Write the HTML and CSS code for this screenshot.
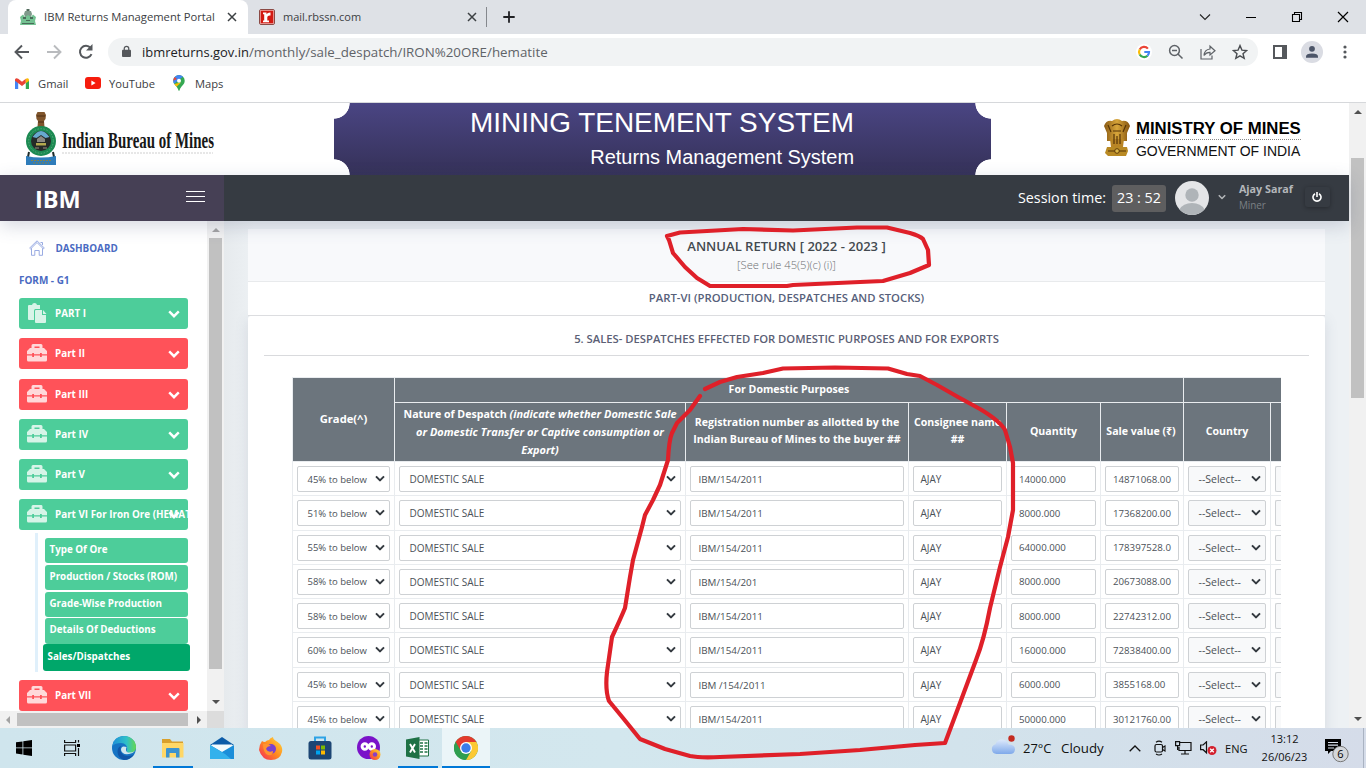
FILE: index.html
```
<!DOCTYPE html>
<html lang="en">
<head>
<meta charset="utf-8">
<title>IBM Returns Management Portal</title>
<link rel="stylesheet" href="styles.css">
</head>
<body>
<svg class="defs" aria-hidden="true">
  <defs>
    <symbol id="chev" viewBox="0 0 12 8"><path d="M1.200 1.400 6 6.200l4.800-4.800" fill="none" stroke="currentColor" stroke-width="2.400"/></symbol>
    <symbol id="x" viewBox="0 0 10 10"><path d="M1 1l8 8M9 1l-8 8" fill="none" stroke="#3c4043" stroke-width="1.500"/></symbol>
    <symbol id="toolbox" viewBox="0 0 20 18">
      <path fill-rule="evenodd" d="M6 0h8a1.500 1.500 0 0 1 1.500 1.500V4H17l3 3v3.300h-5.200V9h-1.800v1.300H7V9H5.200v1.300H0V7l3-3h1.500V1.500A1.500 1.500 0 0 1 6 0zM7.500 2.500V4h5V2.500z"/>
      <path d="M0 11.500h5.200V13H7v-1.500h6V13h1.800v-1.500H20V16a1.500 1.500 0 0 1-1.500 1.500h-17A1.500 1.500 0 0 1 0 16z"/>
    </symbol>
    <linearGradient id="edgeA" x1="0" y1="0" x2="1" y2="0"><stop offset="0" stop-color="#1f8fd8"/><stop offset=".6" stop-color="#2fc0c8"/><stop offset="1" stop-color="#66d850"/></linearGradient>
    <linearGradient id="cloud" x1="0" y1="0" x2="0" y2="1"><stop offset="0" stop-color="#dde9fb"/><stop offset="1" stop-color="#7fa9ea"/></linearGradient>
    <linearGradient id="fire" x1="1" y1="0" x2="0" y2="1"><stop offset="0" stop-color="#ffe040"/><stop offset=".5" stop-color="#ff8a1f"/><stop offset="1" stop-color="#f5255c"/></linearGradient>
    <linearGradient id="gold" x1="0" y1="0" x2="1" y2="0"><stop offset="0" stop-color="#8a5a14"/><stop offset=".5" stop-color="#d8a63a"/><stop offset="1" stop-color="#84530f"/></linearGradient>
  </defs>
</svg>

<div class="tabs">
  <div class="tab active">
    <svg class="fav" viewBox="0 0 16 16"><path d="M6.500 0h3v2h-3z" fill="#516b5c"/><path d="M5 2h6l1 3-1 3H5L4 5z" fill="#7f9a8b"/><path d="M0 8l3-2.500L5 8l3-2 3 2 2-2.500L16 8l-1 4 1 4H0l1-4z" fill="#74c292"/><path d="M3 8h3v2H3zM10 8h3v2h-3zM6 11h4v1H6zM2 14h12v1H2z" fill="#4a6c5a"/></svg>
    <span class="tab-title t1">IBM Returns Management Portal</span>
    <svg class="tx" viewBox="0 0 10 10"><use href="#x"/></svg>
  </div>
  <div class="tab">
    <svg class="fav" viewBox="0 0 16 16"><rect x=".5" y=".5" width="15" height="15" rx="1.500" fill="#fff" stroke="#8b4a45"/><rect x="1.500" y="1.500" width="13" height="13" fill="#d21a12"/><path d="M4 3.500h3.500v1.800q1.300-2 4-1.800v3q-3.200-.3-3.200 1.700v3.300H10v1.700H4v-1.700h1.200V5.200H4z" fill="#fff"/></svg>
    <span class="tab-title t2">mail.rbssn.com</span>
    <svg class="tx" viewBox="0 0 10 10"><use href="#x"/></svg>
  </div>
  <i class="tab-sep"></i>
  <svg class="plus" viewBox="0 0 12 12"><path d="M6 .3v11.400M.3 6h11.400" stroke="#202124" stroke-width="1.800"/></svg>
  <div class="wc">
    <svg width="12" height="12" viewBox="0 0 12 12"><path d="M1 3.500l5 5 5-5" fill="none" stroke="#222" stroke-width="1.100"/></svg>
    <svg width="12" height="12" viewBox="0 0 12 12"><path d="M1 6.500h10" stroke="#000"/></svg>
    <svg width="12" height="12" viewBox="0 0 12 12"><path d="M1.500 3.500h7v7h-7zM3.500 3.500v-2h7v7h-2" fill="none" stroke="#000" stroke-width="1.100"/></svg>
    <svg width="12" height="12" viewBox="0 0 12 12"><path d="M1 1l10 10M11 1L1 11" stroke="#000" stroke-width="1.200"/></svg>
  </div>
</div>

<div class="toolbar">
  <svg class="nav" viewBox="0 0 16 16"><path d="M15 8H2M8 1.500L1.500 8 8 14.500" fill="none" stroke="#55585c" stroke-width="1.900"/></svg>
  <svg class="nav" viewBox="0 0 16 16"><path d="M1 8h13M8 1.500L14.500 8 8 14.500" fill="none" stroke="#b9bbbe" stroke-width="1.900"/></svg>
  <svg class="nav" viewBox="0 0 16 16"><path d="M13.500 10.200A6 6 0 1 1 12.600 4" fill="none" stroke="#55585c" stroke-width="2"/><path d="M14.500 0v6.500H8z" fill="#55585c"/></svg>
  <div class="omni">
    <svg class="lock" viewBox="0 0 10 13"><rect y="4.500" width="10" height="8" rx="1" fill="#55585c"/><path d="M2.500 5V3.200a2.500 2.500 0 0 1 5 0V5" fill="none" stroke="#55585c" stroke-width="1.400"/></svg>
    <span class="url"><b>ibmreturns.gov.in</b><span>/monthly/sale_despatch/IRON%20ORE/hematite</span></span>
    <div class="omni-icons">
      <svg viewBox="0 0 16 16"><circle cx="8" cy="8" r="8" fill="#fff"/><g fill="none" stroke-width="2.200"><path d="M11.900 4.600A5 5 0 0 0 3.700 5.500" stroke="#ea4335"/><path d="M3.700 5.500a5 5 0 0 0 0 5" stroke="#fbbc05"/><path d="M3.700 10.500a5 5 0 0 0 7.800 1.200" stroke="#34a853"/><path d="M11.500 11.700A5 5 0 0 0 13 8H8.300" stroke="#4285f4"/></g></svg>
      <svg viewBox="0 0 16 16"><path d="M9.700 9.700L14.500 14.500M4 6.500h5" stroke="#5f6368" stroke-width="1.500"/><circle cx="6.500" cy="6.500" r="4.900" fill="none" stroke="#5f6368" stroke-width="1.500"/></svg>
      <svg viewBox="0 0 16 16"><path d="M1 5v10h11v-3.500" fill="none" stroke="#5f6368" stroke-width="1.200"/><path d="M4 11.500Q4.500 5.500 10 5V2.200L15 6.700 10 11V8.300Q6.200 8.200 4 11.500z" fill="none" stroke="#5f6368" stroke-width="1.200"/></svg>
      <svg viewBox="0 0 16 16"><path d="M8 1.600l1.900 4.500 4.800.4-3.700 3.200 1.200 4.700L8 11.900l-4.200 2.500L5 9.700 1.300 6.500l4.800-.4z" fill="none" stroke="#4a4d51" stroke-width="1.400"/></svg>
    </div>
  </div>
  <svg class="panel" viewBox="0 0 14 14"><path d="M1 1h12v12H1z" fill="none" stroke="#55585c" stroke-width="2"/><path d="M9 1h4v12H9z" fill="#55585c"/></svg>
  <svg class="user" viewBox="0 0 22 22"><circle cx="11" cy="11" r="11" fill="#dadce3"/><circle cx="11" cy="7.800" r="2.900" fill="#4c5568"/><path d="M5 16.800v-1.300q0-3 6-3t6 3v1.300z" fill="#4c5568"/></svg>
  <svg class="dots" viewBox="0 0 4 14"><g fill="#55585c"><circle cx="2" cy="2" r="1.600"/><circle cx="2" cy="7" r="1.600"/><circle cx="2" cy="12" r="1.600"/></g></svg>
</div>

<div class="bookmarks">
  <svg width="14" height="11" viewBox="0 0 14 11"><path d="M0 1.500V11h3.200V4.500z" fill="#4285f4"/><path d="M14 1.500V11h-3.200V4.500z" fill="#34a853"/><path d="M0 1.500Q1-.6 3.200.8L7 3.700 10.800.8 10.800 5 7 8 0 2.800z" fill="#ea4335"/><path d="M10.800.8Q13-.6 14 1.500V3l-3.200 2.300z" fill="#fbbc04"/></svg>
  <span class="bk1">Gmail</span>
  <svg width="16" height="12" viewBox="0 0 16 12"><rect width="16" height="12" rx="3" fill="#f61c0d"/><path d="M6.400 3.400v5.200L10.600 6z" fill="#fff"/></svg>
  <span class="bk2">YouTube</span>
  <svg width="12" height="16" viewBox="0 0 12 16"><path d="M6 0a5.700 5.700 0 0 1 5.700 5.700C11.700 10 7.500 11 6.500 15.500q-.5.700-1 0C4.500 11 .3 10 .3 5.700A5.700 5.700 0 0 1 6 0z" fill="#34a853"/><path d="M1.200 8.800L10 1.600Q8 0 6 0A5.700 5.700 0 0 0 .3 5.700q0 1.800.9 3.100z" fill="#4285f4"/><path d="M.3 5.700Q.4 3.500 1.700 2L4 4z" fill="#ea4335"/><path d="M1.300 9L8 7.500 3.500 11.700z" fill="#fbbc04"/><circle cx="6" cy="5.700" r="2" fill="#fff"/></svg>
  <span class="bk3">Maps</span>
</div>

<div class="page">
  <div class="site">
    <header class="brand">
      <svg class="seal" viewBox="0 0 30 53"><path d="M11.500 0h7l1.500 3-.5 4-1.500 2 .5 6h-7l.5-6-1.500-2-.5-4z" fill="#80552c"/><path d="M11 4h8M12 10h6" stroke="#4c2f14"/><path d="M3 40l-1 5M27 40l1 5" stroke="#1d2c2a" stroke-width="2"/><circle cx="15" cy="29" r="15" fill="#1c8a52"/><circle cx="15" cy="29" r="12.300" fill="none" stroke="#56ab7b" stroke-dasharray="1.500 1.500"/><circle cx="15" cy="29" r="10" fill="#252a28"/><path d="M6.500 25q8.500-12 17 0l-4 1-4.500-3-4.500 3z" fill="#67a9ce"/><path d="M10 31h10v2.500H10z" fill="#b3a94e"/><path d="M11 27l4-3 4 3v3h-8z" fill="#8b8982"/><path d="M9 36h4M17 36h4" stroke="#9a8d80"/><path d="M0 44q15 3 30 0v9H0z" fill="#2f7dbb"/><path d="M5 48.500h20M7 51h16" stroke="#87834b" stroke-dasharray="2 1"/></svg>
      <svg class="ibm-name" width="156" height="34" viewBox="0 0 156 34"><text x="1" y="22" textLength="152" lengthAdjust="spacingAndGlyphs">Indian Bureau of Mines</text><path d="M1 27h151" stroke="#cfcfcf" stroke-dasharray="2 1"/></svg>
      <div class="banner"><div class="mts">MINING TENEMENT SYSTEM</div><div class="rms">Returns Management System</div></div>
      <svg class="lions" viewBox="0 0 26 38"><path d="M8 2q5-4 10 0 6-1 8 5l-3 7v8H3v-8L0 7q2-6 8-5z" fill="url(#gold)"/><path d="M6 20h14l-1 8H7z" fill="#b98525"/><path d="M3 28h20l1 4-2 5H4l-3-3z" fill="#b98a24"/><path d="M8 7q5-4 10 0M9 12h8M4 6l3 7M22 6l-3 7M10 15v10M16 15v10M13 17v8M4 32h18" fill="none" stroke="#573507" stroke-width="1.200"/><circle cx="13" cy="32" r="2.300" fill="#ddb94a" stroke="#5f3a08"/></svg>
      <div class="ministry"><b>MINISTRY OF MINES</b><span>GOVERNMENT OF INDIA</span></div>
    </header>
    <div class="navbar">
      <div class="nav-left"><span>IBM</span><svg width="19" height="12" viewBox="0 0 19 12"><path d="M0 .5h19M0 5.500h19M0 10.500h19" stroke="#fff" stroke-width="1.200"/></svg></div>
      <div class="nav-right">
        <span class="sess">Session time:</span><span class="time">23 : 52</span>
        <svg class="avatar" viewBox="0 0 34 34"><circle cx="17" cy="17" r="17" fill="#e4e5e7"/><circle cx="17" cy="14" r="6.700" fill="#afb4b8"/><path d="M4.500 28.500Q8 22 17 22t12.500 6.500A17 17 0 0 1 4.500 28.500z" fill="#afb4b8"/></svg>
        <svg class="ncar" viewBox="0 0 12 8"><use href="#chev"/></svg>
        <div class="who"><b>Ajay Saraf</b><span>Miner</span></div>
        <div class="power"><svg width="10" height="10" viewBox="0 0 10 10"><path d="M3 1.700a4 4 0 1 0 4 0M5 0v5" fill="none" stroke="#fff" stroke-width="1.600"/></svg></div>
      </div>
    </div>
    <div class="body">
      <aside class="side">
        <div class="side-top">
          <div class="menu">
            <div class="dash"><svg width="16" height="16" viewBox="0 0 16 16"><path d="M.7 8L8 .8 15.300 8l-.9.9L8 2.500 1.600 8.900zM2.500 8.300v7h3.300v-4.800h4.400v4.800h3.300v-7M11.500 2.500h2V5" fill="none" stroke="#8ea3e0" stroke-width=".9"/></svg><span>DASHBOARD</span></div>
            <div class="form-h">FORM - G1</div>
            <div class="mi g"><svg class="ic tall" viewBox="0 0 20 20"><path d="M2 2h3q.3-2 2.500-2T10 2h3v4H8.500Q7 6 7 8v9H2q-1 0-1-1V3q0-1 1-1z"/><path d="M9 7h6v5h4v7q0 1-1 1H9q-1 0-1-1V8q0-1 1-1zM16 7l3.500 4H16z"/></svg><span>PART I</span><svg class="cv" viewBox="0 0 12 8"><use href="#chev"/></svg></div>
            <div class="mi r"><svg class="ic" viewBox="0 0 20 18"><use href="#toolbox"/></svg><span>Part II</span><svg class="cv" viewBox="0 0 12 8"><use href="#chev"/></svg></div>
            <div class="mi r"><svg class="ic" viewBox="0 0 20 18"><use href="#toolbox"/></svg><span>Part III</span><svg class="cv" viewBox="0 0 12 8"><use href="#chev"/></svg></div>
            <div class="mi g"><svg class="ic" viewBox="0 0 20 18"><use href="#toolbox"/></svg><span>Part IV</span><svg class="cv" viewBox="0 0 12 8"><use href="#chev"/></svg></div>
            <div class="mi g"><svg class="ic" viewBox="0 0 20 18"><use href="#toolbox"/></svg><span>Part V</span><svg class="cv" viewBox="0 0 12 8"><use href="#chev"/></svg></div>
            <div class="mi g"><svg class="ic" viewBox="0 0 20 18"><use href="#toolbox"/></svg><span>Part VI For Iron Ore (HEMAT</span><svg class="cv" viewBox="0 0 12 8"><use href="#chev"/></svg></div>
            <div class="sub">
              <div>Type Of Ore</div><div>Production / Stocks (ROM)</div><div>Grade-Wise Production</div><div>Details Of Deductions</div><div class="cur">Sales/Dispatches</div>
            </div>
            <div class="mi r last"><svg class="ic" viewBox="0 0 20 18"><use href="#toolbox"/></svg><span>Part VII</span><svg class="cv" viewBox="0 0 12 8"><use href="#chev"/></svg></div>
          </div>
          <div class="vbar"><i class="tri up grey"></i><i class="thumb"></i><i class="tri down"></i></div>
        </div>
        <div class="hbar"><i class="tri left grey"></i><i class="hthumb"></i><i class="tri right"></i><i class="corner"></i></div>
      </aside>
      <main class="main">
        <div class="title"><h1>ANNUAL RETURN [ 2022 - 2023 ]</h1><p>[See rule 45(5)(c) (i)]</p></div>
        <div class="part">PART-VI (PRODUCTION, DESPATCHES AND STOCKS)</div>
        <div class="card">
          <h2>5. SALES- DESPATCHES EFFECTED FOR DOMESTIC PURPOSES AND FOR EXPORTS</h2>
          <div class="grid" id="grid">
            <div class="th grade">Grade(^)</div>
            <div class="th dom">For Domestic Purposes</div>
            <div class="th exp"></div>
            <div class="th nature"><span>Nature of Despatch <em>(indicate whether Domestic Sale<br>or Domestic Transfer or Captive consumption or<br>Export)</em></span></div>
            <div class="th">Registration number as allotted by the<br>Indian Bureau of Mines to the buyer ##</div>
            <div class="th">Consignee name<br>##</div>
            <div class="th">Quantity</div>
            <div class="th sv">Sale value (₹)</div>
            <div class="th">Country</div>
            <div class="th"></div>
          </div>
        </div>
      </main>
    </div>
  </div>
  <div class="pbar"><i class="tri up"></i><i class="pthumb"></i><i class="tri down"></i></div>
</div>

<div class="taskbar">
  <div class="ti"><svg width="16" height="16" viewBox="0 0 16 16"><path d="M0 2.300L6.500 1.400v6.100H0zM7.300 1.300L16 0v7.500H7.300zM0 8.300h6.500v6.200L0 13.600zM7.300 8.300H16V16l-8.700-1.300z"/></svg></div>
  <div class="ti view"><svg width="17" height="16" viewBox="0 0 17 16"><path d="M.6 0v2.500h11V0M.6 16v-2.500h11V16M.6 5h11v6H.6zM14.500 0v2.500M14.500 8v8" fill="none" stroke="#111" stroke-width="1.200"/><path d="M13 4h3v3h-3z"/></svg></div>
  <div class="ti"><svg width="24" height="24" viewBox="0 0 24 24"><circle cx="12" cy="12" r="12" fill="#1674c4"/><path d="M.3 10Q2 0 12 0c8 0 12 6 12 11 0 4-3 6-6 6-2 0-4-1-3-3 1-4-2-7-6-7Q3 7 .3 10z" fill="url(#edgeA)"/><path d="M9 10c-2 5 1 10 7 10 3 0 5-1 6.500-2Q18 24 12 24 6 22 5.500 16 5.500 11 9 10z" fill="#1056a8"/><path d="M14.500 11q-5.500-2-5.500 3 1 5 8 4 4-.5 6-3-3 2-7 1.500-3-1-1.500-5.500z" fill="#d0e6ee"/></svg></div>
  <div class="ti run"><svg width="22" height="19" viewBox="0 0 22 19"><path d="M0 0h8l2 2.500h11V6H0z" fill="#d9a02c"/><path d="M0 4h21.500v14.500H0z" fill="#ffd766"/><path d="M4 10q0-1 1-1h11.500q1 0 1 1v8.500H14V14H7.500v4.500H4z" fill="#3c93cf"/></svg></div>
  <div class="ti"><svg width="24" height="22" viewBox="0 0 24 22"><path d="M0 8L12 0l12 8z" fill="#0b5ba8"/><path d="M2 7.500h20v8H2z" fill="#f2fafd"/><path d="M0 8l12 7 12-7v14H0z" fill="#1b8ed9"/><path d="M0 22V8l15 9 6 5z" fill="#33b1ec"/></svg></div>
  <div class="ti"><svg width="24" height="23" viewBox="0 0 24 23"><path d="M3 4q1 1 3 1 2-2 4-2 1-2 4-3c0 3 4 4 7 7q3 4 2 8-2 8-11 8T0 13q0-5 3-9z" fill="url(#fire)"/><circle cx="12" cy="12" r="5" fill="#7a42cf"/><path d="M4 7q5-1 8 2-4 0-5 3 2 4 7 2 0 5-5 4-5-2-5-11z" fill="#ff9330"/></svg></div>
  <div class="ti"><svg width="24" height="24" viewBox="0 0 24 24"><path d="M7 6V1.500h10V6" fill="none" stroke="#2ea3e6" stroke-width="2"/><rect x=".5" y="5" width="23" height="18.500" rx="2.500" fill="#1d4674"/><path d="M8 9.500h4v4H8z" fill="#f25022"/><path d="M13 9.500h4v4h-4z" fill="#7fba00"/><path d="M8 14.500h4v4H8z" fill="#00a4ef"/><path d="M13 14.500h4v4h-4z" fill="#ffb900"/></svg></div>
  <div class="ti"><svg width="24" height="24" viewBox="0 0 24 24"><circle cx="11.500" cy="11.500" r="11.500" fill="#7a12c9"/><circle cx="7.800" cy="10.500" r="2.700" fill="none" stroke="#fff" stroke-width="3"/><circle cx="14.800" cy="10.500" r="2.700" fill="none" stroke="#fff" stroke-width="3"/><circle cx="18" cy="18.500" r="5.500" fill="url(#fire)"/><circle cx="18" cy="18.500" r="2.300" fill="#8b3fc4"/></svg></div>
  <div class="ti run"><svg width="23" height="22" viewBox="0 0 23 22"><path d="M12 3h10.500v16H12z" fill="#fff" stroke="#217346"/><path d="M14 6h3M18.500 6h3M14 9h3M18.500 9h3M14 12h3M18.500 12h3M14 15h3M18.500 15h3" stroke="#217346" stroke-width="1.500"/><path d="M0 2.500L13.500 0v22L0 19.500z" fill="#1e7145"/><path d="M4 7l5 8.500M9 7l-5 8.500" stroke="#fff" stroke-width="1.900"/></svg></div>
  <div class="ti cur-app"><svg width="24" height="24" viewBox="0 0 24 24"><circle cx="12" cy="12" r="12" fill="#2f9e4f"/><path d="M12 6h10.400A12 12 0 0 1 12 24l5.200-9z" fill="#fcc934"/><path d="M1.600 6A12 12 0 0 1 22.400 6H12L6.800 15z" fill="#e33b2e"/><path d="M1.600 6l5.200 9L12 17.500l-1 6.500A12 12 0 0 1 1.600 6z" fill="#2f9e4f"/><circle cx="12" cy="12" r="6" fill="#fff"/><circle cx="12" cy="12" r="4.700" fill="#3b7de8"/></svg></div>
  <div class="tray">
    <svg class="wx" viewBox="0 0 25 20"><path d="M5.500 19a5 5 0 0 1-1-9.800Q6 4 11.500 4.500 16 5 17.500 9.500 24 9.500 24 14.500 23.500 19 19 19z" fill="url(#cloud)"/><circle cx="20.500" cy="3.500" r="3.200" fill="#c42b20"/></svg>
    <span class="deg">27°C</span><span class="cl">Cloudy</span>
    <svg class="up-c" viewBox="0 0 12 7"><path d="M.7 6.300L6 1l5.300 5.300" fill="none" stroke="#111" stroke-width="1.300"/></svg>
    <svg class="cam" viewBox="0 0 12 16"><rect x="1" y="4.500" width="7.500" height="7.500" rx="1.500" fill="none" stroke="#111" stroke-width="1.200"/><path d="M8.500 7.500l2.500-1.500v5L8.500 9.500M2 2.200Q5 0 8 2.200M2 14q3 2 6 0" fill="none" stroke="#111" stroke-width="1.100"/></svg>
    <svg class="net" viewBox="0 0 17 14"><path d="M5 1.500h11v8H4V6M10 9.500v3.500M6 13h8M.6.600h4v4h-4zM2.600 4.600V9" fill="none" stroke="#111" stroke-width="1.200"/></svg>
    <svg class="vol" viewBox="0 0 17 14"><path d="M.6 4h2.500L6.500.8v11L3.100 8.700H.6z" fill="none" stroke="#111" stroke-width="1.200"/><circle cx="12" cy="9.500" r="4.500" fill="#d3202e"/><path d="M10.200 7.700l3.600 3.600M13.800 7.700l-3.600 3.600" stroke="#fff" stroke-width="1.300"/></svg>
    <span class="eng">ENG</span>
    <div class="clock"><span>13:12</span><span>26/06/23</span></div>
    <svg class="note" viewBox="0 0 26 25"><path d="M1 1h16v12H7l-3 3v-3H1z"/><path d="M4 4.500h10M4 7.200h10M4 10h6" stroke="#d8deea" stroke-width="1.200"/><circle cx="16.500" cy="16" r="7.700" fill="#d3d6da" stroke="#777"/><text x="16.500" y="20" text-anchor="middle">6</text></svg>
    <i class="peek"></i>
  </div>
</div>

<svg class="marker" viewBox="0 0 1366 768">
  <path d="M667 236L680 232.500 743 229 793 230.500 857 227.500H887L910 233Q920 236 923 239L928 250 929 265 910 273 883 281 860 282 793 285 787 286H710L697 278 685 267 673 253 669 240z"/>
  <path d="M705 389L720 382 737 377 763 373 783 368.500 835 367.500 888 368.500 907 374 920 376 937 385 958 397 980 409Q1000 421 1005 430L1010 447 1013 463V510L1008 537 1000 567 990 608Q984 640 976 660L960 703 945 743 915 745 860 750 800 754 720 757Q700 758 690 756L665 749 640 739 623 718 609 701Q605 690 607 672L612 637Q620 620 625 608L630 577 633 560 642 527 645 515 653 500 660 485 668 460Q669 440 672 433L677 423 690 410 700 396"/>
</svg>
<script src="script.js"></script>
</body>
</html>
```
FILE: script.js
```
const rows = [
  ['45% to below', 'IBM/154/2011', '14000.000', '14871068.00'],
  ['51% to below', 'IBM/154/2011', '8000.000', '17368200.00'],
  ['55% to below', 'IBM/154/2011', '64000.000', '178397528.0'],
  ['58% to below', 'IBM/154/201', '8000.000', '20673088.00'],
  ['58% to below', 'IBM/154/2011', '8000.000', '22742312.00'],
  ['60% to below', 'IBM/154/2011', '16000.000', '72838400.00'],
  ['45% to below', 'IBM /154/2011', '6000.000', '3855168.00'],
  ['45% to below', 'IBM/154/2011', '50000.000', '30121760.00']
];
const caret = '<svg class="sc" viewBox="0 0 12 8"><use href="#chev"/></svg>';
const cell = (kind, text, icon = '') =>
  `<div class="td"><div class="field ${kind}"><span>${text}</span>${icon}</div></div>`;
document.getElementById('grid').insertAdjacentHTML('beforeend', rows.map(r =>
  cell('sel gr', r[0], caret) + cell('sel', 'DOMESTIC SALE', caret) + cell('reg', r[1]) +
  cell('con', 'AJAY') + cell('num qty', r[2]) + cell('num', r[3]) +
  cell('sel off', '--Select--', caret) + cell('off', '')
).join(''));
```
FILE: styles.css
```
*{box-sizing:border-box}
body{margin:0;width:1366px;height:768px;overflow:hidden;position:relative;display:flex;flex-direction:column;font-family:"Open Sans","Noto Sans",sans-serif;background:#fff;color:#3c4043}
svg{display:block;flex:none}
span,b{white-space:nowrap}
.defs{position:absolute;width:0;height:0}

.tabs{height:34px;flex:none;background:#dee1e6;display:flex;align-items:center}
.tab{display:flex;align-items:center;height:34px;width:240px;padding-left:12px}
.tab.active{background:#fff;border-radius:8px 8px 0 0;margin-left:8px}
.fav{width:16px;height:16px;margin-right:8px}
.tab:not(.active){padding-left:11px}
.tab-title{font-size:11.240px;width:183px;line-height:16px}
.t2{font-size:11px}
.tab:not(.active) .tab-title{width:184px}
.tx{width:10px;height:10px}
.tab-sep{width:1px;height:20px;background:#85888d;margin-right:16px;margin-left:-2px}
.plus{width:12px;height:12px}
.wc{margin-left:auto;display:flex;gap:34px;margin-right:17px;height:28px;align-items:center}

.toolbar{height:35px;flex:none;display:flex;align-items:center;padding-left:14px}
.nav{width:16px;height:16px;margin-right:16px}
.omni{width:1150px;height:28px;border-radius:14px;background:#f1f3f4;display:flex;align-items:center;padding:0 10px 0 14px;margin-left:-2px}
.lock{width:9px;height:13px;margin-right:11px}
.url{font-size:13.340px;color:#5f6368;line-height:20px}
.url b{font-weight:400;font-size:12.950px;color:#202124}
.omni-icons{margin-left:auto;display:flex;gap:16px}
.omni-icons svg{width:16px;height:16px}
.panel{width:14px;height:14px;margin-left:15px}
.user{width:22px;height:22px;margin-left:14px}
.dots{width:4px;height:14px;margin-left:20px}

.bookmarks{height:34px;flex:none;display:flex;align-items:center;padding:0 0 5px 15px;font-size:11.200px;border-bottom:1px solid #d6d8db}
.bk1{width:30px;margin:0 17px 0 9px}
.bk2{width:46px;margin:0 18px 0 8px}
.bk3{margin-left:10px}

.page{height:625px;flex:none;display:flex}
.site{width:1349px;display:flex;flex-direction:column}
.pbar{width:17px;background:#f1f1f1;display:flex;flex-direction:column;align-items:center}
.pbar .tri.up{margin-top:7px}
.pthumb{width:13px;height:240px;background:#c1c1c1;margin-top:44px}
.pbar .down{margin-top:auto;margin-bottom:7px}
.tri{width:0;height:0;border:4px solid transparent;flex:none}
.up{border-top:0;border-bottom-color:#505050}
.down{border-bottom:0;border-top-color:#505050}
.left{border-left:0;border-right-color:#505050}
.right{border-right:0;border-left-color:#505050}
.up.grey{border-bottom-color:#a3a3a3}
.left.grey{border-right-color:#a3a3a3}

.brand{height:72px;flex:none;display:flex;align-items:flex-start;background:#fff}
.seal{width:30px;height:53px;margin:9px 5px 0 26px}
.ibm-name{margin-top:23px}
.ibm-name text{font:700 24px "Liberation Serif",serif;fill:#181818}
.banner{width:657px;height:72px;margin-left:117px;padding-right:137px;text-align:right;color:#fff;font-family:"Liberation Sans",sans-serif;background:radial-gradient(circle 16px at 0 0,#fff 96%,transparent),radial-gradient(circle 16px at 100% 0,#fff 96%,transparent),radial-gradient(circle 16px at 0 100%,#fff 96%,transparent),radial-gradient(circle 16px at 100% 100%,#fff 96%,transparent),linear-gradient(#4a4583,#353158)}
.mts{font-size:27.950px;line-height:32px;margin-top:4px}
.rms{font-size:19.960px;line-height:24px;margin-top:6px}
.lions{width:26px;height:38px;margin:16px 6px 0 113px}
.ministry{display:flex;flex-direction:column;color:#111;font-family:"Liberation Sans",sans-serif;margin-top:16px}
.ministry b{font-size:16.750px;line-height:20px;height:21px;border-bottom:1px dotted #888;color:#000}
.ministry span{font-size:13.980px;line-height:20px;margin-top:1px}

.navbar{height:46px;flex:none;display:flex;position:relative;z-index:2;box-shadow:0 5px 18px rgba(70,80,120,.22)}
.nav-left{width:224px;background:#464055;display:flex;align-items:center;justify-content:space-between;padding:2px 19px 0 35px;color:#fff;font-weight:700;font-size:23.500px}
.nav-left svg{margin-top:-4px}
.nav-right{flex:1;background:#363b42;display:flex;align-items:center;color:#fff}
.sess{font-size:14.300px;margin:-2px 0 0 794px}
.time{font-size:14.300px;background:#5e5e5f;width:54px;height:27px;line-height:26px;text-align:center;border-radius:3px;margin:0 9px 0 6px}
.avatar{width:34px;height:34px;margin-top:-1px}
.ncar{width:8px;height:6px;color:#b3b6b9;margin:0 13px 3px 9px}
.who{display:flex;flex-direction:column;width:66px;color:#9ea1a5}
.who b{font-size:10.740px;line-height:15px;color:#b4b7ba;margin-top:-1px}
.who span{font-size:9.870px;line-height:16px;color:#7b8085}
.power{width:25px;height:20px;display:flex;align-items:center;justify-content:center;box-shadow:0 1px 4px rgba(0,0,0,.3);border-radius:3px;margin-top:-2px}

.body{height:507px;display:flex;overflow:hidden}
.side{width:224px;flex:none;display:flex;flex-direction:column;background:#fff}
.side-top{height:490px;display:flex;overflow:hidden}
.menu{width:207px;padding:17px 19px 0;overflow:hidden;color:#4a6ac2}
.dash{display:flex;align-items:center;height:20px;font-weight:700;font-size:9.900px;padding-left:10px;gap:10.500px}
.form-h{font-weight:700;font-size:9.950px;line-height:14px;margin-top:15px}
.mi{width:169px;height:31px;margin-bottom:9.250px;border-radius:3px;display:flex;align-items:center;color:#fff;font-weight:700;font-size:9.850px;padding:0 0 1px 8px;position:relative}
.form-h + .mi{margin-top:11px}
.g,.sub div{background:#4dcd9a}
.r{background:#ff5259}
.ic{width:20px;height:18px;fill:#fff;opacity:.78}
.tall{height:20px}
.mi span{margin-left:8px}
.cv{width:12px;height:8px;position:absolute;right:8px;top:12px}
.sub{margin:-6.250px 0 7.500px 16px;padding:5px 0 0 7px;border-left:3px solid #e0f0fb;width:153px;display:flex;flex-direction:column;gap:1.500px;height:139px}
.sub div{height:25.200px;flex:none;border-radius:3px;color:#fff;font-weight:700;font-size:9.800px;line-height:24px;padding-left:4.500px;width:143px}
.sub .cur{background:#00a76a;width:147px;height:27px;margin:-1px 0 0 -2px;line-height:26px;position:relative}
.vbar{width:17px;background:#f1f1f1;display:flex;flex-direction:column;align-items:center}
.vbar .up{margin-top:7px}
.thumb{width:13px;height:431px;background:#c1c1c1;margin:6px 0 0}
.vbar .down{margin-top:31px}
.hbar{height:17px;background:#f1f1f1;display:flex;align-items:center}
.hbar .left{margin-left:6px}
.hthumb{width:171px;height:13px;background:#c1c1c1;margin-left:7px}
.hbar .right{margin-left:9px}
.corner{width:17px;height:17px;background:#dcdcdc;margin-left:auto}

.main{flex:1;background:linear-gradient(90deg,#e6eaed,#edf1f4 30px,#edf1f4);padding:8px 24px 0}
.title{height:53px;background:#f8f9fb;border-bottom:1px solid #e8eaec;text-align:center}
.title h1{margin:0;font-size:13.050px;font-weight:600;line-height:18px;padding-top:8px;color:#434a50}
.title p{margin:0;font-size:11.170px;font-weight:300;line-height:16px;padding-top:2px;color:#6c6f72;height:19px}
.part{height:34px;background:#fff;border-bottom:1px solid #dcdde0;text-align:center;font-weight:600;font-size:11.320px;line-height:31px;color:#56607a;position:relative}
.card{height:420px;background:#fff;box-shadow:0 4px 14px rgba(90,100,130,.16);padding:0 16px;border-radius:3px 3px 0 0}
.card h2{margin:0 0 21px;height:40px;border-bottom:1px solid #d9dadd;text-align:center;font-weight:600;font-size:11.260px;line-height:46px;color:#5b6075}
.grid{margin-left:28px;width:989px;overflow:hidden;display:grid;grid-template-columns:102px 291px 223px 98px 94px 83px 87px 11px;grid-template-rows:25px 59px;grid-auto-rows:34.300px}
.th{background:#6c757d;color:#fff;font-weight:700;font-size:10.600px;line-height:17px;text-align:center;display:flex;align-items:center;justify-content:center;border-left:1px solid #e9ecef;border-top:1px solid #e9ecef;white-space:nowrap;padding-bottom:2px}
.grade{grid-row:1/3;font-size:11.200px}
.dom{grid-column:2/7}
.exp{grid-column:7/9}
.nature{padding-bottom:0}
.nature em{font-size:10.950px}
.sv{padding-right:2px}
.td{border-left:1px solid #e9ecef;border-top:1px solid #e9ecef;padding:4px 4px 0 4px}
.td:nth-child(8n+10){padding-right:0}
.field{height:26px;border:1px solid #ced1d4;border-radius:2px;background:#fff;display:flex;align-items:center;font-size:10px;color:#4b5157;padding:0 4px 0 7.500px}
.td:nth-child(8n+2) .field{border-right:0;border-radius:2px 0 0 2px}
.field.sel{padding-left:9.500px;justify-content:space-between}
.field.gr{font-size:9.500px}
.sc{width:10px;height:7px;color:#343a40;margin:0 0 1px}
.field.reg{font-size:9.830px}
.field.con{font-size:10px;padding-left:6.500px}
.field.num{font-size:9.700px;padding-left:7px}
.field.off{background:#f8f9fa;font-size:10.500px}

.taskbar{height:40px;flex:none;display:flex;background:linear-gradient(90deg,#cfe5ed,#d3e7ee 45%,#d2e3ec 70%,#d5dce9);color:#111}
.ti{width:49px;height:40px;display:flex;align-items:center;justify-content:center}
.ti:first-child{width:48px}
.view{width:51px;padding-right:3px}
.run{background:linear-gradient(#0078d7,#0078d7) 50% 100%/40px 2px no-repeat}
.cur-app{width:48px;background:linear-gradient(#0078d7,#0078d7) 0 100%/48px 2px no-repeat,#ebf5f8}
.tray{margin-left:auto;display:flex;align-items:center;width:375px}
.wx{width:25px;height:20px;margin-bottom:6px}
.deg{font-size:12.940px;margin-left:7px;width:38px}
.cl{font-size:13.300px;width:43px}
.up-c{width:12px;height:7px;margin-left:25px}
.cam{width:12px;height:16px;margin-left:13px}
.net{width:17px;height:14px;margin-left:9px}
.vol{width:17px;height:14px;margin-left:8px}
.eng{font-size:11.050px;margin-left:8px;width:24px}
.clock{display:flex;flex-direction:column;align-items:center;font-size:11px;line-height:18px;margin-left:12px;margin-top:-1px;width:47px}
.note{width:26px;height:25px;margin-left:16px;margin-top:5px}
.note text{font:11px "Open Sans",sans-serif}
.peek{width:1px;height:40px;background:#aab3c2;margin-left:13px}

.marker{position:absolute;left:0;top:0;width:1366px;height:768px;z-index:9;pointer-events:none}
.marker path{fill:none;stroke:#df2029;stroke-width:4.200;stroke-linejoin:round;stroke-linecap:round}
```
